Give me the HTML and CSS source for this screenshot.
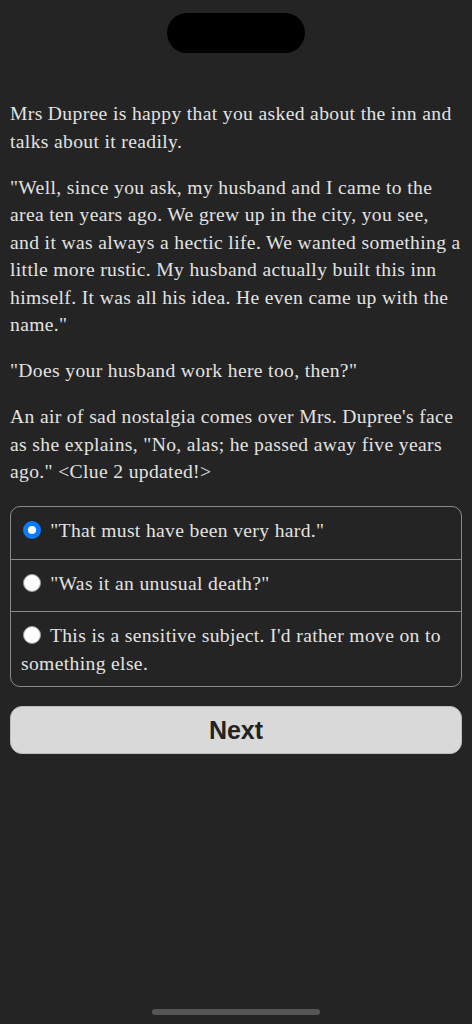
FILE: index.html
```html
<!DOCTYPE html>
<html lang="en">
<head>
    <meta charset="UTF-8">
    <meta name="viewport" content="width=device-width, initial-scale=1.0">
    <title>The Inn</title>
    <link rel="stylesheet" href="styles.css">
</head>
<body>
    <div class="top-bar">
        <div class="island"></div>
    </div>

    <div class="story">
        <p>Mrs Dupree is happy that you asked about the inn and talks about it readily.</p>
        <p>"Well, since you ask, my husband and I came to the area ten years ago. We grew up in the city, you see, and it was always a hectic life. We wanted something a little more rustic. My husband actually built this inn himself. It was all his idea. He even came up with the name."</p>
        <p>"Does your husband work here too, then?"</p>
        <p>An air of sad nostalgia comes over Mrs. Dupree's face as she explains, "No, alas; he passed away five years ago." &lt;Clue 2 updated!&gt;</p>
    </div>

    <div class="choices">
        <label class="choice">
            <input type="radio" name="answer" value="1" checked>
            "That must have been very hard."
        </label>
        <label class="choice">
            <input type="radio" name="answer" value="2">
            "Was it an unusual death?"
        </label>
        <label class="choice">
            <input type="radio" name="answer" value="3">
            This is a sensitive subject. I'd rather move on to something else.
        </label>
    </div>

    <button class="next-btn">Next</button>

    <div class="home-indicator"></div>
</body>
</html>
```

FILE: styles.css
```css
body {
    font-family: 'Liberation Serif', serif;
    background-color: #242424;
    color: #e2e2e2;
    margin: 0;
    padding: 0 10px;
    height: 1024px;
    box-sizing: border-box;
    display: flex;
    flex-direction: column;
}

.top-bar {
    display: flex;
    justify-content: center;
    padding-top: 13px;
    height: 100px;
    box-sizing: border-box;
}

.island {
    width: 138px;
    height: 40px;
    background-color: #000;
    border-radius: 20px;
}

.story p {
    font-size: 19.6px;
    letter-spacing: 0.35px;
    line-height: 27.5px;
    margin: 0 0 18.5px 0;
}

.choices {
    border: 1px solid #8a8a8a;
    border-radius: 10px;
    margin-top: 2px;
}

.choice {
    display: block;
    box-sizing: border-box;
    min-height: 52px;
    font-size: 19.6px;
    letter-spacing: 0.35px;
    line-height: 27.5px;
    padding: 10px 10px 9px 10px;
    border-top: 1px solid #8a8a8a;
}

.choice:first-child {
    border-top: none;
}

.choice input {
    appearance: none;
    width: 18px;
    height: 18px;
    margin: 0 4px 0 2px;
    border-radius: 50%;
    background-color: #fff;
    border: 1px solid #9a9a9a;
    box-sizing: border-box;
    vertical-align: -2px;
}

.choice input:checked {
    background-color: #fff;
    border: 5.5px solid #0a7aff;
}

.next-btn {
    margin-top: 19px;
    width: 100%;
    height: 48px;
    background-color: #d9d9d9;
    color: #222;
    border: 1px solid #bdbdbd;
    border-radius: 12px;
    font-family: 'Liberation Sans', Arial, sans-serif;
    font-weight: bold;
    font-size: 25px;
    cursor: pointer;
}

.home-indicator {
    margin: auto auto 9px auto;
    width: 168px;
    height: 6px;
    border-radius: 3px;
    background-color: #555;
}
```
